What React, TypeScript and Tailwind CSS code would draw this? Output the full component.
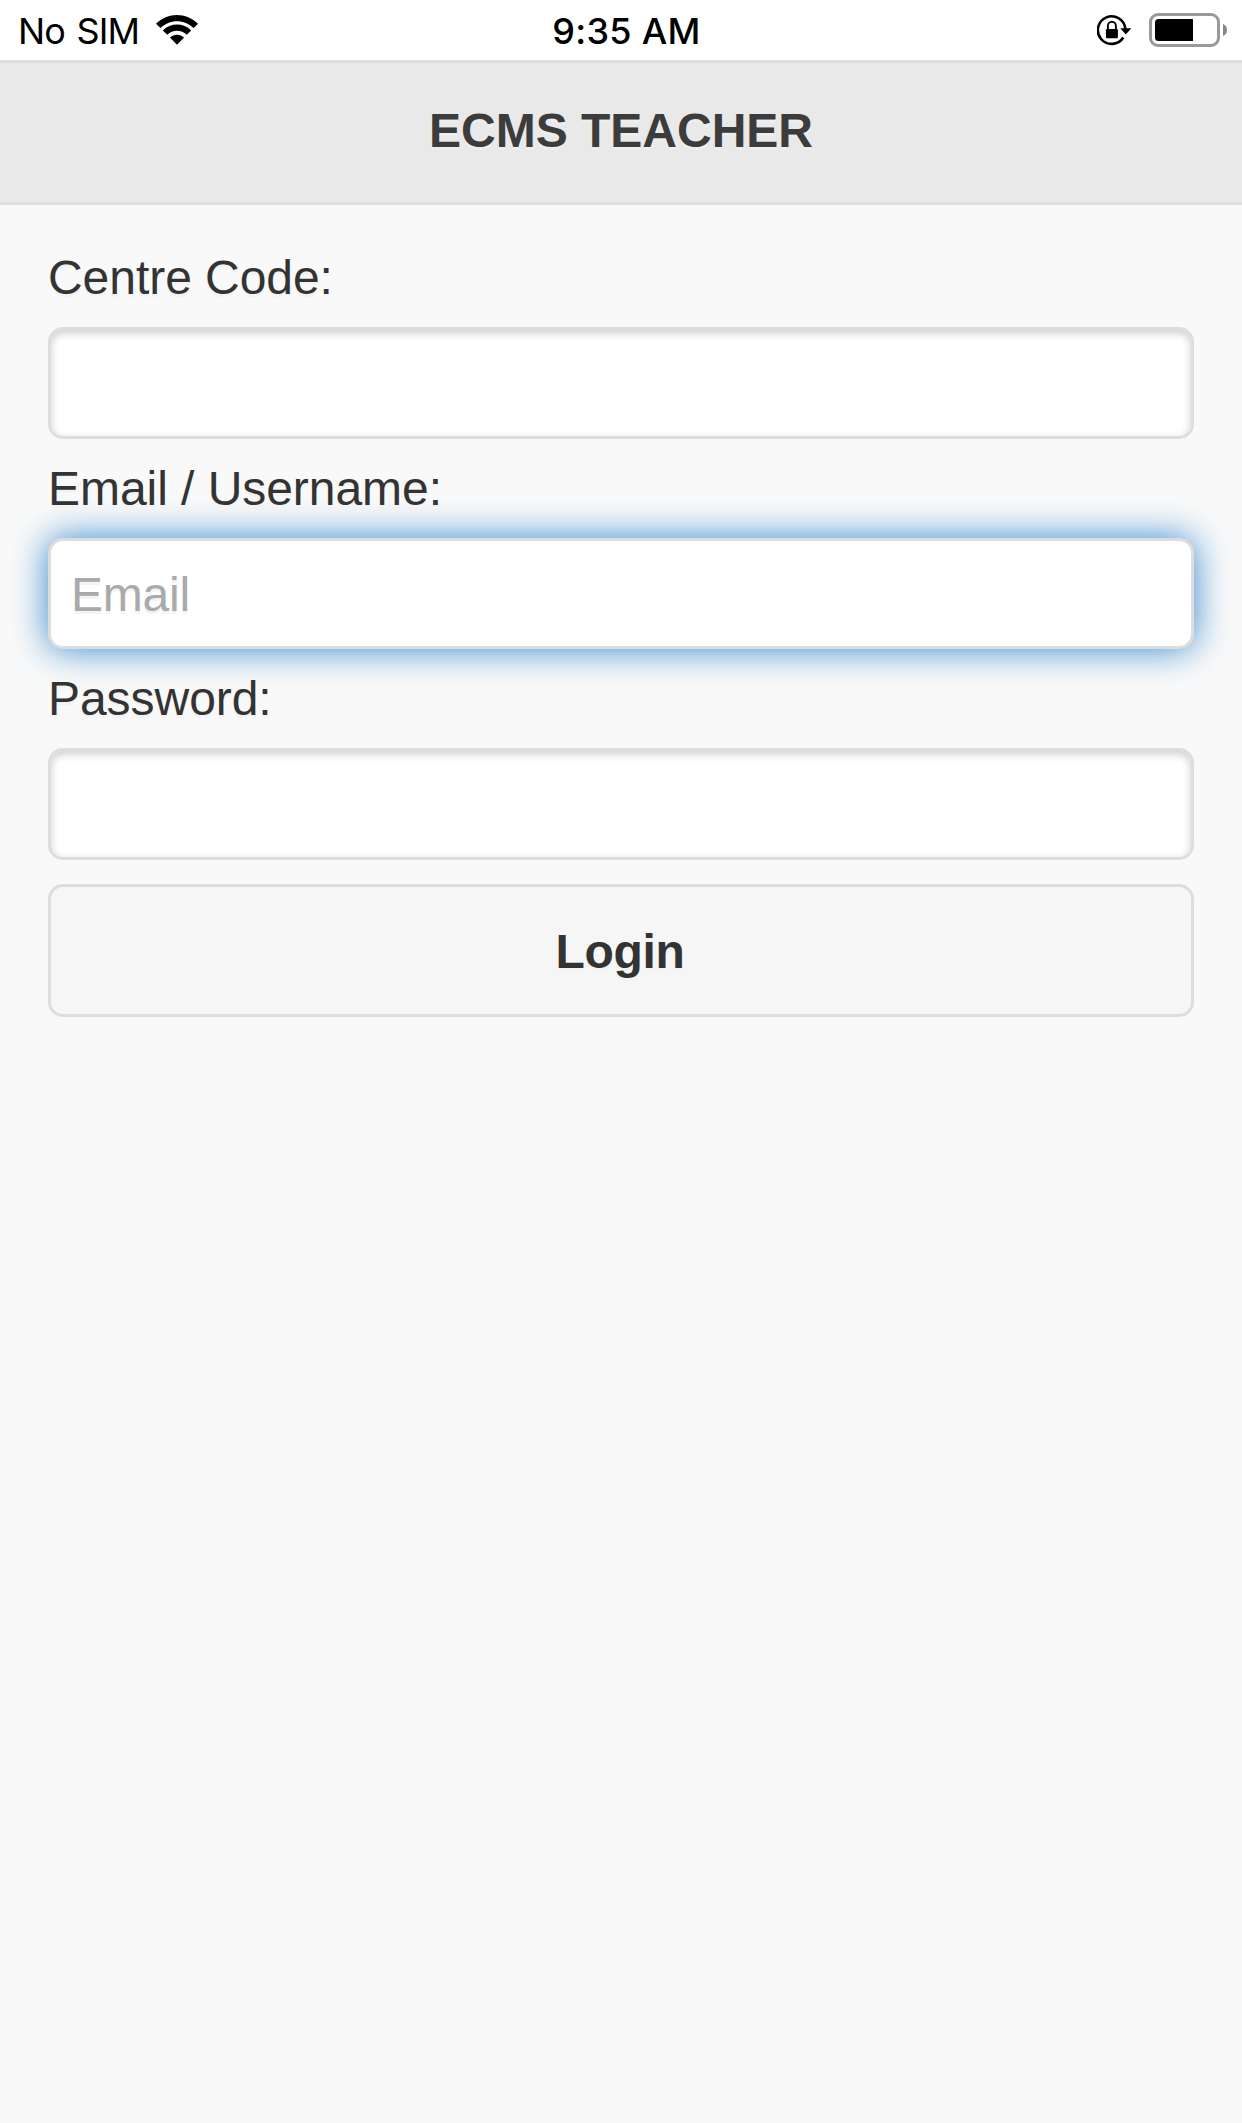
const inputBase =
  "block w-full rounded-[15px] border-[3px] border-[#ddd] bg-white pl-[20px] pr-[19px] text-[48px] text-[#333] outline-none [text-shadow:0_3px_0_#f3f3f3] placeholder:text-[#aaa] placeholder:opacity-100";
const inset = "shadow-[inset_0_3px_9px_rgba(0,0,0,0.2)]";
const label = "block text-[48px] leading-[67px] tracking-[-0.05px] text-[#333] [text-shadow:0_3px_0_#f3f3f3]";

function WifiIcon() {
  return (
    <svg width="42" height="30" viewBox="0 0 42 30" className="ml-[17px] mt-[15px]">
      <path d="M0 8.7C11.5-2.9 30.5-2.9 42 8.7L37.6 13.1C28.4 3.9 13.6 3.9 4.4 13.1Z" />
      <path d="M6.8 15.4C14.6 7.6 27.4 7.6 35.2 15.4L30.8 19.8C25.4 14.4 16.6 14.4 11.2 19.8Z" />
      <path d="M13.9 22.6C17.8 18.7 24.2 18.7 28.1 22.6L21 29.7Z" />
    </svg>
  );
}

function RotationLockIcon() {
  return (
    <svg width="35" height="32" viewBox="0 0 35 32" className="mt-[14px]">
      <path d="M26.3 23.5A13.8 13.8 0 1 1 28.4 15" fill="none" stroke="#000" strokeWidth="2.6" />
      <path d="M23.3 14.2H34.3L28.8 20.4Z" />
      <rect x="8.9" y="15" width="12" height="9.2" rx="1.2" />
      <path d="M10.9 15.5V12A4 4.2 0 0 1 18.9 12V15.5" fill="none" stroke="#000" strokeWidth="1.9" />
    </svg>
  );
}

function BatteryIcon() {
  return (
    <svg width="79" height="34" viewBox="0 0 79 34" className="ml-[17px] mt-[13px]">
      <rect x="1.5" y="1.5" width="68" height="31" rx="7.5" fill="#fff" stroke="#999" strokeWidth="3" />
      <path d="M44 6H9.5A3.5 3.5 0 0 0 6 9.5V24.5A3.5 3.5 0 0 0 9.5 28H44Z" />
      <path d="M74 11A5.8 6.3 0 0 1 74 23Z" fill="#888" />
    </svg>
  );
}

export default function App() {
  return (
    <div className="min-h-[2123px] w-full bg-[#f9f9f9] font-['Liberation_Sans',Arial,sans-serif]">
      <div className="grid h-[60px] grid-cols-3 bg-white font-['Inter',sans-serif] text-[36px] leading-[62px] text-black">
        <div className="flex items-start pl-[18px]">
          <span className="tracking-[-0.8px] [word-spacing:2px]">No SIM</span>
          <WifiIcon />
        </div>
        <div className="pl-[11px] text-center font-medium tracking-[0.3px]">9:35 AM</div>
        <div className="flex items-start justify-end pr-[14px]">
          <RotationLockIcon />
          <BatteryIcon />
        </div>
      </div>
      <header className="flex h-[145px] items-center justify-center border-y-[3px] border-[#ddd] bg-[#e9e9e9] pb-[4px]">
        <h1 className="text-[48px] font-bold leading-[62px] text-[#3c3c3c] [text-shadow:0_3px_0_#eee]">ECMS TEACHER</h1>
      </header>
      <form className="px-[48px] pt-[39px]" onSubmit={(e) => e.preventDefault()}>
        <label htmlFor="centre" className={label}>Centre Code:</label>
        <input id="centre" className={`${inputBase} ${inset} my-[16px] h-[112px]`} />
        <label htmlFor="email" className={label}>Email / Username:</label>
        <input
          id="email"
          placeholder="Email"
          className={`${inputBase} my-[16px] h-[111px] pt-[2px] tracking-[-0.2px] shadow-[0_0_36px_#3388cc]`}
        />
        <label htmlFor="password" className={label}>Password:</label>
        <input id="password" type="password" className={`${inputBase} ${inset} mb-[24px] mt-[16px] h-[112px]`} />
        <button
          type="submit"
          className="block h-[133px] w-full rounded-[15px] border-[3px] border-[#ddd] bg-[#f6f6f6] pr-[2px] pt-[2px] text-[48px] font-bold tracking-[-0.3px] text-[#333] [text-shadow:0_3px_0_#f3f3f3]"
        >
          Login
        </button>
      </form>
    </div>
  );
}
